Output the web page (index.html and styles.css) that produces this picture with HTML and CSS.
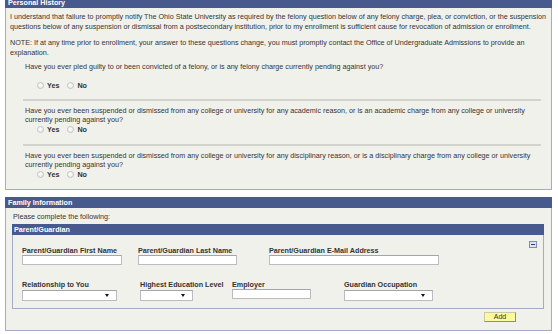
FILE: index.html
```html
<!DOCTYPE html>
<html lang="en">
<head>
  <meta charset="UTF-8">
  <title>Application - Personal History</title>
  <link rel="stylesheet" href="styles.css">
</head>
<body>
  <div class="page">

    <section class="group history">
      <div class="group-title">Personal History</div>
      <div class="group-body">
        <p class="intro">I understand that failure to promptly notify The Ohio State University as required by the felony question below of any felony charge, plea, or conviction, or the suspension questions below of any suspension or dismissal from a postsecondary institution, prior to my enrollment is sufficient cause for revocation of admission or enrollment.</p>
        <p class="intro">NOTE: If at any time prior to enrollment, your answer to these questions change, you must promptly contact the Office of Undergraduate Admissions to provide an explanation.</p>

        <div class="question single">
          <p>Have you ever pled guilty to or been convicted of a felony, or is any felony charge currently pending against you?</p>
          <div class="choices">
            <label><span class="radio"></span>Yes</label>
            <label><span class="radio"></span>No</label>
          </div>
        </div>

        <div class="question">
          <p>Have you ever been suspended or dismissed from any college or university for any academic reason, or is an academic charge from any college or university currently pending against you?</p>
          <div class="choices">
            <label><span class="radio"></span>Yes</label>
            <label><span class="radio"></span>No</label>
          </div>
        </div>

        <div class="question last">
          <p>Have you ever been suspended or dismissed from any college or university for any disciplinary reason, or is a disciplinary charge from any college or university currently pending against you?</p>
          <div class="choices">
            <label><span class="radio"></span>Yes</label>
            <label><span class="radio"></span>No</label>
          </div>
        </div>
      </div>
    </section>

    <section class="group family">
      <div class="group-title">Family Information</div>
      <div class="group-body">
        <p class="hint">Please complete the following:</p>

        <div class="subgroup">
          <div class="subgroup-title">Parent/Guardian</div>
          <div class="subgroup-body">
            <div class="collapse-row"><span class="collapse" title="Delete row"></span></div>

            <div class="field-row">
              <div class="field w-first">
                <label>Parent/Guardian First Name</label>
                <input type="text" class="in-first">
              </div>
              <div class="field w-last">
                <label>Parent/Guardian Last Name</label>
                <input type="text" class="in-last">
              </div>
              <div class="field">
                <label>Parent/Guardian E-Mail Address</label>
                <input type="text" class="in-email">
              </div>
            </div>

            <div class="field-row second">
              <div class="field w-rel">
                <label>Relationship to You</label>
                <div class="select sel-rel"></div>
              </div>
              <div class="field w-edu">
                <label>Highest Education Level</label>
                <div class="select sel-edu"></div>
              </div>
              <div class="field w-emp">
                <label>Employer</label>
                <input type="text" class="in-emp">
              </div>
              <div class="field">
                <label>Guardian Occupation</label>
                <div class="select sel-occ"></div>
              </div>
            </div>
          </div>
        </div>

        <div class="actions">
          <button type="button" class="btn-add">Add</button>
        </div>
      </div>
    </section>

  </div>
</body>
</html>
```

FILE: styles.css
```css
* {
  box-sizing: border-box;
}
html, body {
  margin: 0;
  padding: 0;
  background: #ffffff;
  font-family: "Liberation Sans", Arial, sans-serif;
  font-size: 7.2px;
  color: #333333;
  overflow: hidden;
}
p {
  margin: 0;
}
.page {
  padding: 0 6px 0 5px;
}

/* group boxes */
.group {
  background: #f1f1ec;
  border: 1px solid #a3abc8;
}
.group-title {
  background: #485a8d;
  color: #ffffff;
  font-weight: bold;
  height: 11px;
  line-height: 11px;
  padding-left: 3px;
  margin: -1px -1px 0 -1px;
}
.history {
  margin-top: -3px;
}
.history .group-body {
  padding: 4px 4px 0 4px;
}
.intro {
  line-height: 10px;
}
.intro + .intro {
  margin-top: 6px;
}

/* questions */
.question {
  margin: 0 6px 0 13px;
  padding: 5px 0 9px 2px;
  border-bottom: 2px solid #d2d3cc;
  line-height: 9px;
}
.question.single {
  padding-top: 4px;
  padding-bottom: 8px;
}
.question.single .choices {
  margin-top: 9px;
}
.question.last {
  border-bottom: none;
}
.choices {
  display: flex;
  gap: 8px;
  height: 11px;
  align-items: center;
  padding-left: 12px;
  font-weight: bold;
}
.choices label {
  display: flex;
  align-items: center;
  gap: 3px;
}
.radio {
  width: 7px;
  height: 7px;
  border-radius: 50%;
  border: 1px solid #c2c2c2;
  background: radial-gradient(circle at 40% 40%, #ffffff, #e4e4e4);
}

/* family */
.family {
  margin-top: 7px;
}
.family .group-body {
  padding: 4px 6px 8px 6px;
}
.hint {
  line-height: 9px;
  padding-left: 1px;
}
.subgroup {
  margin-top: 3px;
  border: 1px solid #a3abc8;
  margin-right: 1px;
}
.subgroup-title {
  background: #485a8d;
  color: #ffffff;
  font-weight: bold;
  height: 11px;
  line-height: 11px;
  padding-left: 2px;
  margin: -1px -1px 0 -1px;
}
.subgroup-body {
  padding: 6px 6px 7px 9px;
}
.collapse-row {
  display: flex;
  justify-content: flex-end;
  height: 6px;
}
.collapse {
  width: 8px;
  height: 7px;
  border: 1px solid #7d8cb8;
  background: #dfe4f1;
  display: flex;
  align-items: center;
  justify-content: center;
}
.collapse::before {
  content: "";
  width: 4px;
  height: 1px;
  background: #2f3f73;
}

.field-row {
  display: flex;
}
.field-row.second {
  margin-top: 16px;
}
.field label {
  display: block;
  font-weight: bold;
  line-height: 8px;
  height: 8px;
  white-space: nowrap;
}
.w-first { width: 116px; }
.w-last { width: 131px; }
.w-rel { width: 118px; }
.w-edu { width: 92px; }
.w-emp { width: 112px; }

.field input {
  display: block;
  height: 10px;
  padding: 0;
  margin: 0;
  border: 1px solid #b9bcc0;
  border-top-color: #a2a5aa;
  background: #ffffff;
}
.in-first { width: 100px; }
.in-last { width: 99px; }
.in-email { width: 170px; }
.in-emp { width: 79px; }

.select {
  position: relative;
  margin-top: 1px;
  height: 11px;
  border: 1px solid #b9bcc0;
  border-top-color: #a2a5aa;
  background: #ffffff;
}
.select::after {
  content: "";
  position: absolute;
  right: 7px;
  top: 3px;
  border-left: 2px solid transparent;
  border-right: 2px solid transparent;
  border-top: 3px solid #111111;
}
.sel-rel { width: 95px; }
.sel-edu { width: 53px; }
.sel-occ { width: 89px; }

.actions {
  display: flex;
  justify-content: flex-end;
  padding-top: 3px;
  padding-right: 29px;
}
.btn-add {
  width: 32px;
  height: 10px;
  padding: 0;
  font-family: inherit;
  font-size: 7px;
  line-height: 8px;
  color: #333333;
  background: #fbfa9c;
  border: 1px solid #c9c9a8;
  border-right-color: #8e8e80;
  border-bottom-color: #8e8e80;
}
```
